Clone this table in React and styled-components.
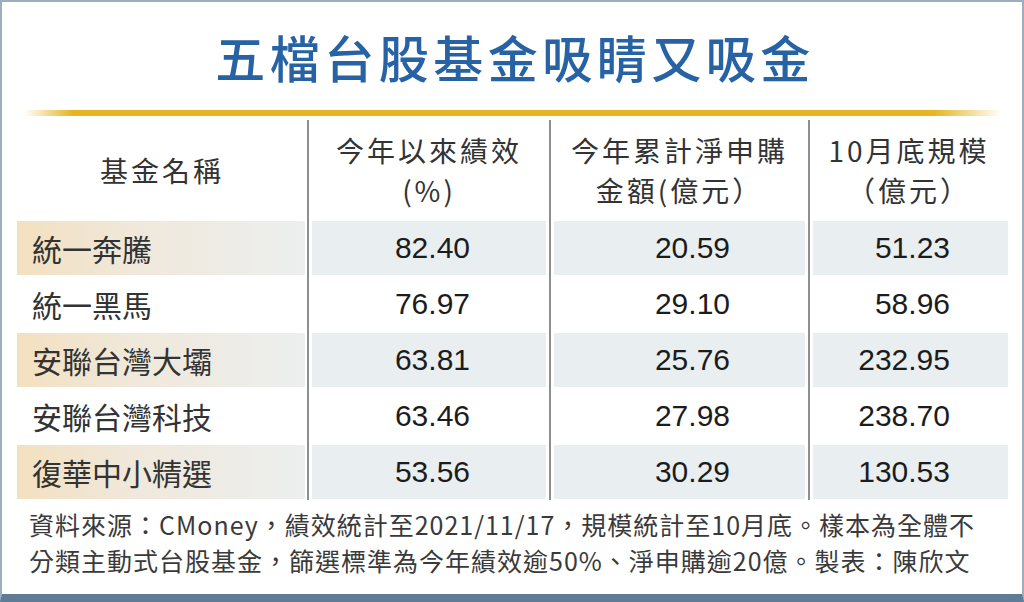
import React from "react";
import styled, { createGlobalStyle } from "styled-components";

const funds = [
    { name: "統一奔騰", perf: "82.40", net: "20.59", size: "51.23" },
    { name: "統一黑馬", perf: "76.97", net: "29.10", size: "58.96" },
    { name: "安聯台灣大壩", perf: "63.81", net: "25.76", size: "232.95" },
    { name: "安聯台灣科技", perf: "63.46", net: "27.98", size: "238.70" },
    { name: "復華中小精選", perf: "53.56", net: "30.29", size: "130.53" },
];

function App() {
    return (
        <>
            <GlobalStyle />
            <Frame>
                <Title>五檔台股基金吸睛又吸金</Title>
                <GoldRule />
                <Table>
                    <HeadCell $col={0}>基金名稱</HeadCell>
                    <HeadCell $col={1}>
                        今年以來績效
                        <br />
                        (%)
                    </HeadCell>
                    <HeadCell $col={2}>
                        今年累計淨申購
                        <br />
                        金額(億元）
                    </HeadCell>
                    <HeadCell $col={3}>
                        10月底規模
                        <br />
                        （億元）
                    </HeadCell>
                    {funds.map((f, i) => {
                        const striped = i % 2 === 0;
                        return (
                            <React.Fragment key={f.name}>
                                <Cell $col={0}>
                                    <Fill $tone={striped ? "name" : "none"}>
                                        <Name>{f.name}</Name>
                                    </Fill>
                                </Cell>
                                <Cell $col={1}>
                                    <Fill $tone={striped ? "grey" : "none"} $pad={76}>
                                        <Num>{f.perf}</Num>
                                    </Fill>
                                </Cell>
                                <Cell $col={2}>
                                    <Fill $tone={striped ? "grey" : "none"} $pad={75}>
                                        <Num>{f.net}</Num>
                                    </Fill>
                                </Cell>
                                <Cell $col={3}>
                                    <Fill $tone={striped ? "grey" : "none"} $pad={58}>
                                        <Num>{f.size}</Num>
                                    </Fill>
                                </Cell>
                            </React.Fragment>
                        );
                    })}
                </Table>
                <Note>
                    資料來源：CMoney，績效統計至2021/11/17，規模統計至10月底。樣本為全體不
                    <br />
                    分類主動式台股基金，篩選標準為今年績效逾50%、淨申購逾20億。製表：陳欣文
                </Note>
            </Frame>
        </>
    );
}

export default App;

const GlobalStyle = createGlobalStyle`
    body {
        margin: 0;
        background: #fff;
        font-family: "Noto Sans CJK TC", "Noto Sans", sans-serif;
    }
`;

const tones = {
    none: "transparent",
    grey: "#e9eef1",
    name: "linear-gradient(to right, #f3e0bf 0%, #f0e8db 40%, #ecefef 100%)",
};

const Frame = styled.div`
    width: 1024px;
    height: 602px;
    box-sizing: border-box;
    border: 2px solid #9caebe;
    border-bottom: 8px solid #5e7c96;
    background: #fff;
    display: flex;
    flex-direction: column;
`;
const Title = styled.h1`
    margin: 0;
    height: 108px;
    display: flex;
    align-items: center;
    justify-content: center;
    padding-left: 6px;
    font-size: 50px;
    font-weight: 500;
    letter-spacing: 4.5px;
    color: #2762a4;
`;
const GoldRule = styled.div`
    height: 6px;
    margin: 0 20px 0 22px;
    background: linear-gradient(
        to right,
        rgba(228, 182, 28, 0) 0%,
        #e3b622 5%,
        #e3b622 93%,
        rgba(228, 182, 28, 0) 100%
    );
`;
const Table = styled.div`
    margin: 4px 0 0 15px;
    display: grid;
    grid-template-columns: 290px 242px 259px 200px;
    grid-template-rows: 100px repeat(5, 56px);
`;
const HeadCell = styled.div`
    border-left: ${(p) => (p.$col === 0 ? "none" : "2px solid #8e8e8e")};
    display: flex;
    align-items: center;
    justify-content: center;
    text-align: center;
    font-size: 28px;
    line-height: 40px;
    letter-spacing: 3px;
    color: #333;
`;
const Cell = styled.div`
    border-left: ${(p) => (p.$col === 0 ? "none" : "2px solid #8e8e8e")};
    padding: 1px ${(p) => (p.$col === 3 ? 0 : p.$col === 0 ? 2 : 3)}px 1px
        ${(p) => (p.$col === 0 ? 0 : 3)}px;
    display: flex;
`;
const Fill = styled.div`
    flex: 1;
    display: flex;
    align-items: center;
    justify-content: ${(p) => (p.$pad ? "flex-end" : "flex-start")};
    padding: ${(p) => (p.$pad ? `0 ${p.$pad}px 0 0` : "0 0 0 15px")};
    background: ${(p) => tones[p.$tone]};
`;
const Name = styled.span`
    font-size: 30px;
    color: #333;
`;
const Num = styled.span`
    font-family: "Liberation Sans", Arial, sans-serif;
    font-size: 30px;
    color: #1c1c1c;
`;
const Note = styled.p`
    margin: 0;
    padding: 6px 0 0 27px;
    font-size: 25px;
    line-height: 36px;
    letter-spacing: 1px;
    color: #3a3a3a;
    white-space: nowrap;
`;
